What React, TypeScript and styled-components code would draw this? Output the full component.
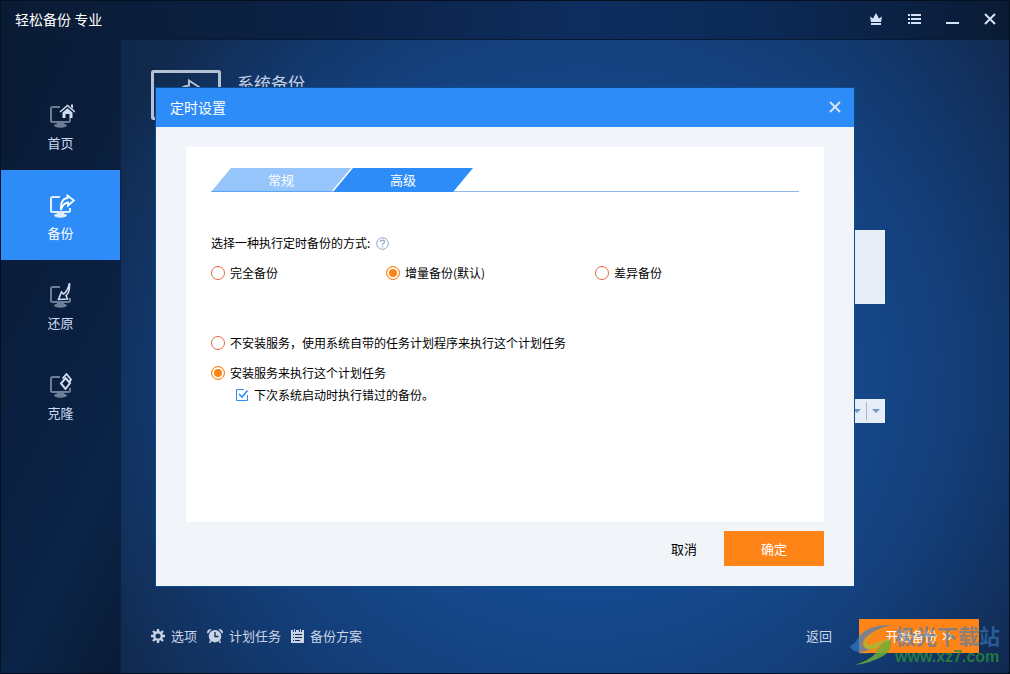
import React from 'react';
import styled, { createGlobalStyle, css } from 'styled-components';

const Global = createGlobalStyle`
  *, *::before, *::after { box-sizing: border-box; }
  body {
    margin: 0;
    background: #0a1930;
    font-family: "Noto Sans CJK SC", "Liberation Sans", sans-serif;
    font-size: 12px;
    line-height: 18px;
    color: #000;
  }
  button, input, select {
    font: inherit;
    color: inherit;
    margin: 0;
    padding: 0;
    border: 0;
    background: none;
  }
  h1, h2, p, ul, fieldset, legend { margin: 0; padding: 0; border: 0; font-weight: 400; list-style: none; }
  a { color: inherit; text-decoration: none; }
`;

const Window = styled.div`
  display: flex;
  flex-direction: column;
  min-height: 100vh;
  border: 1px solid #04101f;
  background:
    radial-gradient(ellipse 54% 76% at 58% 56%, #154f9c 0%, #15498d 45%, rgba(20, 66, 128, 0.85) 68%, rgba(18, 48, 92, 0) 100%),
    linear-gradient(100deg, #10284a 12%, #12315f 40%, #12315f 75%, #10264a 100%);
`;

const TitleBar = styled.header`
  display: flex;
  align-items: center;
  justify-content: space-between;
  height: 39px;
  padding: 0 12px 2px 14px;
  border-bottom: 1px solid #081a35;
  background: linear-gradient(90deg, #0a1b34 0%, #0b2144 30%, #0e2d5e 58%, #0c2a57 75%, #0a1b34 100%);
`;

const AppName = styled.h1`
  font-size: 14px;
  line-height: 20px;
  color: #fff;
`;

const WindowButtons = styled.div`
  display: flex;
  gap: 24px;
`;

const IconButton = styled.button`
  display: flex;
  width: 14px;
  height: 14px;
  color: #d5e2f7;
`;

const Body = styled.div`
  display: flex;
  flex: 1;
`;

const Sidebar = styled.nav`
  width: 120px;
  padding-top: 40px;
  background: linear-gradient(115deg, #091a33 0%, #0a1f3f 45%, #0a2447 75%, #091b35 100%);
  border-right: 1px solid #0c2140;
`;

const NavItem = styled.a<{ $active?: boolean }>`
  display: flex;
  flex-direction: column;
  align-items: center;
  gap: 4px;
  height: 90px;
  padding-top: 23px;
  font-size: 13px;
  line-height: 20px;
  color: ${p => (p.$active ? '#fff' : '#cfdcf0')};
  background: ${p => (p.$active ? '#2d8cf8' : 'transparent')};
`;

const Main = styled.main`
  display: flex;
  flex: 1;
  flex-direction: column;
  padding: 30px 30px 20px;
`;

const PageHead = styled.div`
  display: flex;
  gap: 16px;
  height: 50px;
  color: #b4c1d3;
`;

const PageTitle = styled.h2`
  font-size: 17px;
  line-height: 26px;
  color: #c5d3e8;
`;

const Panels = styled.div`
  display: flex;
  flex: 1;
  flex-direction: column;
  align-items: flex-end;
  gap: 95px;
  padding: 110px 94px 0 0;
`;

const DiskCard = styled.div`
  width: 80%;
  height: 74px;
  background: #e6edf7;
`;

const SplitButton = styled.div`
  display: flex;
  align-items: center;
  height: 24px;
  background: #e6edf7;
  color: #6f97c6;
`;

const SplitPart = styled.button`
  display: flex;
  align-items: center;
  justify-content: center;
  width: 19px;
  height: 18px;
  & + & { border-left: 1px solid #aab6c6; }
`;

const Footer = styled.footer`
  display: flex;
  align-items: center;
  justify-content: space-between;
  height: 34px;
`;

const FooterLinks = styled.div`
  display: flex;
  gap: 10px;
`;

const FooterLink = styled.a`
  display: flex;
  align-items: center;
  gap: 6px;
  font-size: 13px;
  line-height: 20px;
  color: #c9d5e6;
`;

const FooterActions = styled.div`
  position: relative;
  display: flex;
  align-items: center;
  gap: 27px;
`;

const PrimaryButton = styled.button<{ $wide?: boolean }>`
  display: flex;
  align-items: center;
  justify-content: center;
  gap: 4px;
  width: ${p => (p.$wide ? 120 : 100)}px;
  height: ${p => (p.$wide ? 34 : 35)}px;
  font-size: 13px;
  line-height: 20px;
  color: #fff;
  background: #ff8417;
`;

const Watermark = styled.div`
  position: absolute;
  right: -21px;
  bottom: -13px;
  display: flex;
  align-items: flex-end;
  pointer-events: none;
`;

const MarkText = styled.div`
  display: flex;
  flex-direction: column;
  align-items: flex-start;
`;

const MarkName = styled.span`
  font-size: 21px;
  line-height: 26px;
  font-weight: 700;
  color: rgba(60, 125, 190, 0.6);
`;

const MarkSite = styled.span`
  font-family: "Liberation Sans", Arial, sans-serif;
  font-size: 16px;
  line-height: 18px;
  font-weight: 700;
  color: rgba(40, 140, 60, 0.8);
`;

const Overlay = styled.div`
  position: fixed;
  inset: 0;
  display: flex;
  align-items: center;
  justify-content: center;
`;

const Dialog = styled.section`
  display: flex;
  flex-direction: column;
  width: 700px;
  max-width: 100%;
  height: 500px;
  border: 1px solid #0c4a93;
  background: #f1f5fa;
`;

const DialogBar = styled.header`
  display: flex;
  align-items: center;
  justify-content: space-between;
  height: 39px;
  padding: 0 12px 2px 14px;
  color: #fff;
  background: #2d8cf8;
`;

const DialogTitle = styled.h2`
  font-size: 14px;
  line-height: 20px;
`;

const Sheet = styled.div`
  display: flex;
  flex: 1;
  flex-direction: column;
  margin: 20px 30px 0;
  padding: 21px 25px;
  background: #fff;
`;

const TabList = styled.div`
  display: flex;
  height: 24px;
  border-bottom: 1px solid #8fb9ea;
`;

const Tab = styled.button<{ $selected?: boolean }>`
  width: 140px;
  height: 24px;
  font-size: 13px;
  line-height: 24px;
  color: #fff;
  clip-path: polygon(20px 0, 100% 0, calc(100% - 20px) 100%, 0 100%);
  background: ${p => (p.$selected ? '#2d8cf8' : '#96c5fb')};
  & + & { margin-left: -18px; }
  ${p =>
    !p.$selected &&
    css`
      border-bottom: 1px solid #5ba5f8;
    `}
`;

const Question = styled.div`
  display: flex;
  align-items: center;
  gap: 6px;
  margin-top: 42px;
`;

const ModeGrid = styled.div`
  display: grid;
  grid-template-columns: 175px 209px 1fr;
  margin-top: 12px;
`;

const ServiceList = styled.div`
  display: flex;
  flex-direction: column;
  gap: 12px;
  margin-top: 52px;
`;

const Choice = styled.label`
  display: flex;
  align-items: center;
  gap: 5px;
`;

const Radio = styled.input.attrs({ type: 'radio' })`
  appearance: none;
  width: 14px;
  height: 14px;
  border: 1px solid #e8663c;
  border-radius: 50%;
  background: #fff;
  &:checked {
    border-color: #ff8417;
    background: #ff8417;
    box-shadow: inset 0 0 0 2px #fff;
  }
`;

const Missed = styled.label`
  display: flex;
  align-items: center;
  gap: 5px;
  margin: 4px 0 0 24px;
`;

const CheckWrap = styled.span`
  position: relative;
  display: flex;
  color: #2d8cf8;
  svg { position: absolute; inset: 0; pointer-events: none; }
`;

const Check = styled.input.attrs({ type: 'checkbox' })`
  appearance: none;
  width: 14px;
  height: 14px;
`;

const DialogFooter = styled.footer`
  display: flex;
  align-items: center;
  justify-content: flex-end;
  height: 64px;
  padding: 0 30px 11px 0;
`;

const PlainButton = styled.button`
  width: 80px;
  height: 35px;
  font-size: 13px;
`;

const CloseIcon = () => (
  <svg width="14" height="14" viewBox="0 0 14 14" fill="none" stroke="currentColor" strokeWidth="2">
    <path d="M2 2l10 10M12 2L2 12" />
  </svg>
);

const Caret = () => (
  <svg width="8" height="4" viewBox="0 0 8 4" fill="currentColor">
    <path d="M0 0h8L4 4z" />
  </svg>
);

const Screen = ({ strong, children }: { strong?: boolean; children: React.ReactNode }) => (
  <svg width="28" height="26" viewBox="-2 -1 28 26" fill="none" stroke="currentColor" strokeWidth="2">
    <g opacity={strong ? 0.85 : 0.5}>
      <path d="M11 3H3.500Q2 3 2 4.500V16.500Q2 18 3.500 18H19.500Q21 18 21 16.500V14" />
      <path d="M8 18.500h7v1.500h-7z" fill="currentColor" stroke="none" />
      <ellipse cx="11.500" cy="21.500" rx="6.500" ry="2.200" fill="currentColor" stroke="none" />
    </g>
    {children}
  </svg>
);

const HomeIcon = () => (
  <Screen>
    <path d="M11 8L18.500 1.500L26 8" strokeWidth="1.600" />
    <path d="M22 0.500h2v4l-2-1.500z" fill="currentColor" stroke="none" />
    <path d="M13.500 8.500L18.500 4.200L23.500 8.500V14H20.500V10H16.500V14H13.500z" fill="currentColor" stroke="none" />
  </Screen>
);

const BackupIcon = () => (
  <Screen strong>
    <path d="M12 16Q11 5 18.500 4V1.500L25 6.500L19 11.500V8.500Q14 9 12 16z" strokeWidth="1.800" />
  </Screen>
);

const RestoreIcon = () => (
  <Screen>
    <path d="M20.500 -1Q21 9 17 11.500L18.500 15L9.500 15.500L12.500 8L14.500 10Q19 7 20.500 -1z" strokeWidth="1.600" />
  </Screen>
);

const CloneIcon = () => (
  <Screen>
    <path d="M16.500 4L21 9L16.500 15L12 9.500z" />
    <path d="M13.500 4.500L17.500 0L22 5.500L20 8.500" strokeWidth="1.800" />
  </Screen>
);

const nav = [
  { label: '首页', icon: <HomeIcon /> },
  { label: '备份', icon: <BackupIcon />, active: true },
  { label: '还原', icon: <RestoreIcon /> },
  { label: '克隆', icon: <CloneIcon /> },
];

const GearIcon = () => (
  <svg width="14" height="14" viewBox="0 0 14 14" fill="none" stroke="currentColor">
    <circle cx="7" cy="7" r="3.800" strokeWidth="2.400" />
    <path d="M7 0v3M7 11v3M0 7h3M11 7h3M2 2l2 2M10 10l2 2M12 2l-2 2M4 10l-2 2" strokeWidth="2.400" />
  </svg>
);

const ClockIcon = () => (
  <svg width="16" height="14" viewBox="0 0 16 14" fill="currentColor">
    <circle cx="8" cy="7.200" r="6.200" />
    <path d="M0 4Q0 0 4.500 0L1 4.500zM16 4Q16 0 11.500 0L15 4.500zM3 11l1.500 1L3.500 14H2zM13 11l-1.500 1L12.500 14H14z" />
    <path d="M8 3V7.500H11.500" fill="none" stroke="#12294c" strokeWidth="1.300" />
  </svg>
);

const PlanIcon = () => (
  <svg width="13" height="14" viewBox="0 0 13 14">
    <path d="M0 1h2v2h1V0h1v3h1V1h3v2h1V0h1v3h1V1h2v13H0z" fill="currentColor" />
    <path d="M2 5.500h1M4 5.500h7M2 8.500h1M4 8.500h7M2 11.500h1M4 11.500h5" stroke="#12294c" />
  </svg>
);

const ForwardIcon = () => (
  <svg width="11" height="9" viewBox="0 0 11 9" fill="none" stroke="currentColor" strokeWidth="1.300">
    <path d="M1 1l3.500 3.500L1 8M6 1l3.500 3.500L6 8" />
  </svg>
);

export default function App() {
  return (
    <>
      <Global />
      <Window>
        <TitleBar>
          <AppName>轻松备份 专业</AppName>
          <WindowButtons>
            <IconButton aria-label="升级">
              <svg width="14" height="14" viewBox="0 0 14 14" fill="currentColor">
                <path d="M1 4.500l3 2L7 1l3 5.500 3-2L12 10H2zM2 11h10v2H2z" />
              </svg>
            </IconButton>
            <IconButton aria-label="菜单">
              <svg width="14" height="14" viewBox="0 0 14 14" fill="currentColor">
                <path d="M1 2h2v2H1zM4 2h10v2H4zM1 6h2v2H1zM4 6h10v2H4zM1 10h2v2H1zM4 10h10v2H4z" />
              </svg>
            </IconButton>
            <IconButton aria-label="最小化">
              <svg width="14" height="14" viewBox="0 0 14 14" fill="currentColor">
                <path d="M1 10h13v2H1z" />
              </svg>
            </IconButton>
            <IconButton aria-label="关闭"><CloseIcon /></IconButton>
          </WindowButtons>
        </TitleBar>
        <Body>
          <Sidebar>
            {nav.map(n => (
              <NavItem key={n.label} href="#" $active={n.active}>
                {n.icon}
                {n.label}
              </NavItem>
            ))}
          </Sidebar>
          <Main>
            <PageHead>
              <svg width="70" height="50" viewBox="0 0 70 50" fill="none" stroke="currentColor">
                <rect x="1.500" y="1.500" width="67" height="47" rx="1" strokeWidth="3" />
                <path d="M24 28Q28 16 38 15.500V10.500L54 21L38 32V26Q30 26 24 36z" strokeWidth="2" />
              </svg>
              <PageTitle>系统备份</PageTitle>
            </PageHead>
            <Panels>
              <DiskCard />
              <SplitButton>
                <SplitPart aria-label="浏览"><Caret /></SplitPart>
                <SplitPart aria-label="更多"><Caret /></SplitPart>
              </SplitButton>
            </Panels>
            <Footer>
              <FooterLinks>
                <FooterLink href="#"><GearIcon />选项</FooterLink>
                <FooterLink href="#"><ClockIcon />计划任务</FooterLink>
                <FooterLink href="#"><PlanIcon />备份方案</FooterLink>
              </FooterLinks>
              <FooterActions>
                <FooterLink href="#">返回</FooterLink>
                <PrimaryButton $wide>开始备份<ForwardIcon /></PrimaryButton>
                <Watermark>
                  <svg width="45" height="42" viewBox="0 0 45 42">
                    <path d="M42 1Q16 1 8 14Q5 20 0 22Q1 27 8 28Q14 29 20 25Q12 25 13 18Q17 7 42 1z" fill="#2f7fd0" opacity="0.65" />
                    <path d="M35 6Q21 9 17 17Q16 23 24 20Q29 17 40 15Q31 19 27 24Q20 31 7 29Q19 32 25 24Q14 28 14 19Q18 9 35 6z" fill="#8fc63f" opacity="0.7" />
                    <path d="M40 15Q44 25 33 32Q21 39 5 41Q20 36 26 29Q29 20 40 15z" fill="#6fae35" opacity="0.85" />
                  </svg>
                  <MarkText>
                    <MarkName>极光下载站</MarkName>
                    <MarkSite>www.xz7.com</MarkSite>
                  </MarkText>
                </Watermark>
              </FooterActions>
            </Footer>
          </Main>
        </Body>
      </Window>
      <Overlay>
        <Dialog role="dialog" aria-labelledby="dialog-title">
          <DialogBar>
            <DialogTitle id="dialog-title">定时设置</DialogTitle>
            <IconButton aria-label="关闭"><CloseIcon /></IconButton>
          </DialogBar>
          <Sheet>
            <TabList role="tablist">
              <Tab role="tab" aria-selected="false">常规</Tab>
              <Tab role="tab" aria-selected="true" $selected>高级</Tab>
            </TabList>
            <Question>
              <span id="mode-label">选择一种执行定时备份的方式:</span>
              <svg width="13" height="13" viewBox="0 0 13 13" fill="none" stroke="#8ba6c4">
                <circle cx="6.500" cy="6.500" r="5.800" />
                <path d="M4.500 5Q4.500 3.200 6.500 3.200T8.500 5Q8.500 6 6.500 7V8M6.500 9v1.300" strokeWidth="1.200" />
              </svg>
            </Question>
            <ModeGrid role="radiogroup" aria-labelledby="mode-label">
              <Choice><Radio name="mode" />完全备份</Choice>
              <Choice><Radio name="mode" defaultChecked />增量备份(默认)</Choice>
              <Choice><Radio name="mode" />差异备份</Choice>
            </ModeGrid>
            <ServiceList role="radiogroup" aria-label="计划任务">
              <Choice><Radio name="service" />不安装服务，使用系统自带的任务计划程序来执行这个计划任务</Choice>
              <Choice><Radio name="service" defaultChecked />安装服务来执行这个计划任务</Choice>
            </ServiceList>
            <Missed>
              <CheckWrap>
                <Check defaultChecked />
                <svg width="14" height="14" viewBox="0 0 14 14" fill="none" stroke="currentColor">
                  <path d="M9 1.500H1.500V12.500H12.500V7" />
                  <path d="M4 6L7 9L12.500 2.500" strokeWidth="1.600" />
                </svg>
              </CheckWrap>
              下次系统启动时执行错过的备份。
            </Missed>
          </Sheet>
          <DialogFooter>
            <PlainButton>取消</PlainButton>
            <PrimaryButton>确定</PrimaryButton>
          </DialogFooter>
        </Dialog>
      </Overlay>
    </>
  );
}
